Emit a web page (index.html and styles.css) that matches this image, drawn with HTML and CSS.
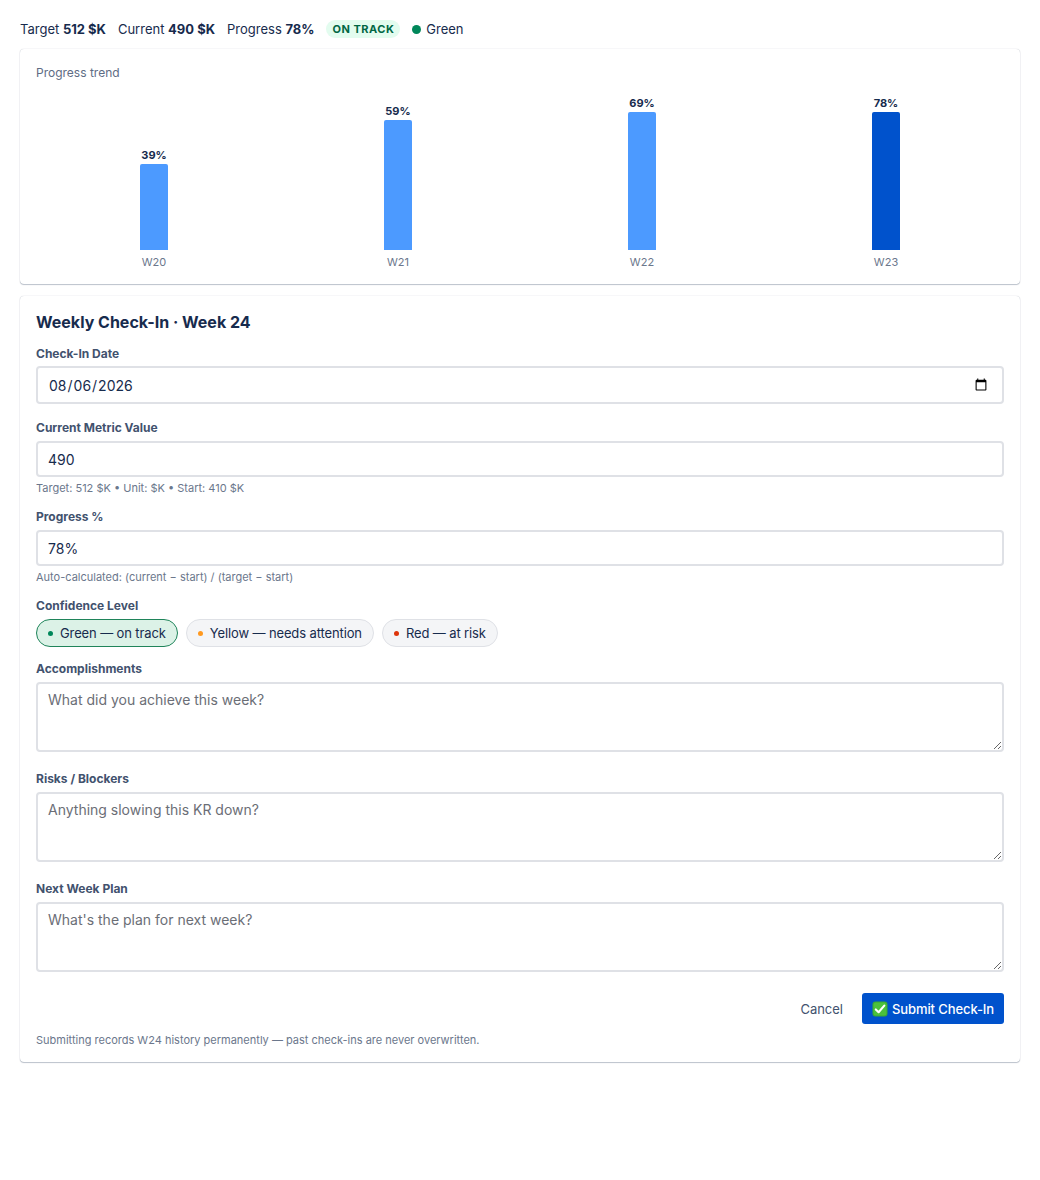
FILE: index.html
```html
<!DOCTYPE html>
<html lang="en">
<head>
<meta charset="utf-8">
<title>KR Check-In</title>
<link rel="stylesheet" href="styles.css">
</head>
<body>
<div class="page">
  <div class="summary">
    <span class="sum-item">Target <b>512 $K</b></span>
    <span class="sum-item">Current <b>490 $K</b></span>
    <span class="sum-item">Progress <b>78%</b></span>
    <span class="badge">ON TRACK</span>
    <span class="sum-item status"><span class="dot dot-green"></span>Green</span>
  </div>

  <section class="card chart-card">
    <div class="card-caption">Progress trend</div>
    <div class="chart">
      <div class="col"><div class="pct">39%</div><div class="bar" style="height:86px"></div><div class="wk">W20</div></div>
      <div class="col"><div class="pct">59%</div><div class="bar" style="height:130px"></div><div class="wk">W21</div></div>
      <div class="col"><div class="pct">69%</div><div class="bar" style="height:138px"></div><div class="wk">W22</div></div>
      <div class="col"><div class="pct">78%</div><div class="bar bar-current" style="height:138px"></div><div class="wk">W23</div></div>
    </div>
  </section>

  <section class="card form-card">
    <h2 class="form-title">Weekly Check-In · Week 24</h2>

    <div class="field field-date">
      <label class="label" for="d">Check-In Date</label>
      <input id="d" class="input input-date" type="date" value="2026-08-06">
    </div>

    <div class="field">
      <label class="label" for="m">Current Metric Value</label>
      <input id="m" class="input" type="text" value="490">
      <div class="hint">Target: 512 $K • Unit: $K • Start: 410 $K</div>
    </div>

    <div class="field">
      <label class="label" for="p">Progress %</label>
      <input id="p" class="input" type="text" value="78%">
      <div class="hint">Auto-calculated: (current − start) / (target − start)</div>
    </div>

    <div class="field field-conf">
      <div class="label">Confidence Level</div>
      <div class="chips">
        <span class="chip chip-active"><span class="cdot cdot-green"></span>Green — on track</span>
        <span class="chip"><span class="cdot cdot-yellow"></span>Yellow — needs attention</span>
        <span class="chip"><span class="cdot cdot-red"></span>Red — at risk</span>
      </div>
    </div>

    <div class="field field-area">
      <label class="label" for="a">Accomplishments</label>
      <textarea id="a" class="area" placeholder="What did you achieve this week?"></textarea>
    </div>

    <div class="field field-area">
      <label class="label" for="r">Risks / Blockers</label>
      <textarea id="r" class="area" placeholder="Anything slowing this KR down?"></textarea>
    </div>

    <div class="field field-area last">
      <label class="label" for="n">Next Week Plan</label>
      <textarea id="n" class="area" placeholder="What's the plan for next week?"></textarea>
    </div>

    <div class="actions">
      <button class="btn btn-cancel" type="button">Cancel</button>
      <button class="btn btn-submit" type="button"><svg class="check" viewBox="0 0 16 16" width="16" height="16" aria-hidden="true"><rect x="0.5" y="0.5" width="15" height="15" rx="3" fill="#3aa935"/><rect x="1.5" y="1.5" width="13" height="13" rx="2.5" fill="#4cc13d"/><path d="M3.8 8.4 L6.6 11.2 L12.3 4.6" fill="none" stroke="#fff" stroke-width="2.1" stroke-linecap="round" stroke-linejoin="round"/></svg><span>Submit Check-In</span></button>
    </div>
    <div class="footnote">Submitting records W24 history permanently — past check-ins are never overwritten.</div>
  </section>
</div>
</body>
</html>
```

FILE: styles.css
```css
* { box-sizing: border-box; }
html, body { margin: 0; padding: 0; background: #fff; }
body {
  font-family: Inter, "Noto Sans", "Liberation Sans", sans-serif;
  color: #172b4d;
}
.page { padding: 20px; }

.summary {
  display: flex;
  align-items: center;
  gap: 12px;
  font-size: 13px;
  line-height: 18px;
  height: 18px;
  margin-bottom: 11px;
}
.sum-item b { font-weight: 700; }
.badge {
  background: #e3fcef;
  color: #006644;
  font-size: 11px;
  font-weight: 700;
  letter-spacing: 0.5px;
  padding: 0 6px;
  line-height: 18px;
  border-radius: 9px;
}
.status { display: inline-flex; align-items: center; gap: 5px; }
.dot { width: 9px; height: 9px; border-radius: 50%; display: inline-block; }
.dot-green { background: #00875a; }

.card {
  background: #fff;
  border-radius: 4px;
  box-shadow: 0 1px 1px rgba(9, 30, 66, 0.25), 0 0 1px rgba(9, 30, 66, 0.31);
  padding: 16px;
}
.chart-card { margin-bottom: 12px; }
.form-card { padding-bottom: 15px; }
.card-caption {
  font-size: 12px;
  line-height: 16px;
  color: #5e6c84;
}
.chart {
  display: flex;
  gap: 8px;
  align-items: flex-end;
  height: 187px;
}
.col {
  flex: 1;
  display: flex;
  flex-direction: column;
  align-items: center;
}
.pct {
  font-size: 11px;
  line-height: 14px;
  font-weight: 700;
  color: #172b4d;
  margin-bottom: 2px;
}
.bar {
  width: 28px;
  background: #4c9aff;
  border-radius: 2px 2px 0 0;
}
.bar-current { background: #0052cc; }
.wk {
  font-size: 11px;
  line-height: 14px;
  color: #6b778c;
  margin-top: 5px;
  margin-bottom: -1px;
}

.form-title {
  margin: 0 0 14px;
  font-size: 16px;
  line-height: 20px;
  font-weight: 700;
  color: #172b4d;
}
.field { margin-bottom: 14px; }
.field-date { margin-bottom: 16px; }
.field-area { margin-bottom: 19px; }
.field-area.last { margin-bottom: 21px; }
.label {
  display: block;
  font-size: 12px;
  line-height: 16px;
  font-weight: 700;
  color: #42526e;
  margin-bottom: 5px;
}
.field-date .label { margin-bottom: 4px; }
.input {
  display: block;
  width: 100%;
  height: 36px;
  border: 2px solid #dfe1e6;
  border-radius: 4px;
  padding: 0 10px;
  font-family: inherit;
  font-size: 14px;
  color: #172b4d;
  background: #fff;
  outline: none;
}
.input-date { height: 38px; padding-right: 12px; }
.hint {
  font-size: 11px;
  line-height: 14px;
  color: #6b778c;
  margin-top: 4px;
}

.chips { display: flex; gap: 8px; }
.chip {
  display: inline-flex;
  align-items: center;
  gap: 7px;
  height: 28px;
  padding: 0 11px;
  border-radius: 14px;
  border: 1px solid #dfe1e6;
  background: #f4f5f7;
  font-size: 13px;
  letter-spacing: -0.12px;
  color: #172b4d;
}
.chip-active {
  background: #dcf2e7;
  border-color: #1f845a;
}
.cdot { width: 5px; height: 5px; border-radius: 50%; display: inline-block; }
.cdot-green { background: #00875a; }
.cdot-yellow { background: #ff991f; }
.cdot-red { background: #de350b; }

.area {
  display: block;
  width: 100%;
  height: 70px;
  border: 2px solid #dfe1e6;
  border-radius: 4px;
  padding: 6px 10px;
  font-family: inherit;
  font-size: 14px;
  line-height: 20px;
  color: #172b4d;
  background: #fff;
  outline: none;
  resize: vertical;
}
.area::placeholder { color: #6b6e76; }

.actions {
  display: flex;
  justify-content: flex-end;
  align-items: center;
  gap: 8px;
}
.btn {
  font-family: inherit;
  font-size: 13px;
  height: 31px;
  border-radius: 3px;
  border: none;
  cursor: pointer;
  white-space: nowrap;
}
.btn-cancel {
  background: transparent;
  color: #42526e;
  padding: 0 11px;
}
.btn-submit {
  background: #0052cc;
  color: #fff;
  font-weight: 500;
  padding: 0 10px;
  display: inline-flex;
  align-items: center;
  gap: 4px;
  letter-spacing: -0.1px;
}
.check { flex: none; }
.footnote {
  margin-top: 9px;
  font-size: 11px;
  line-height: 14px;
  color: #6b778c;
}
```
